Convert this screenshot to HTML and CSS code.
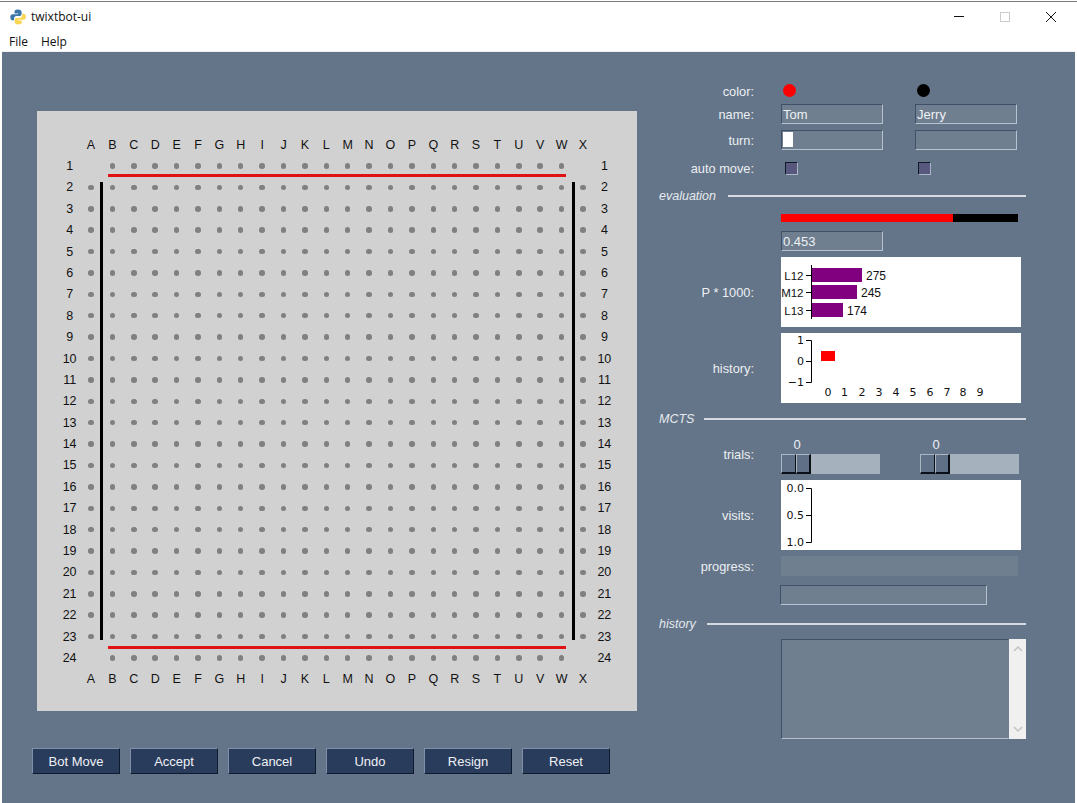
FILE: index.html
```html
<!DOCTYPE html>
<html lang="en">
<head>
<meta charset="utf-8">
<title>twixtbot-ui</title>
<link rel="stylesheet" href="styles.css">
</head>
<body>
<div class="window">
  <header class="titlebar">
    <svg class="appicon" viewBox="0 0 16 16" width="16" height="16">
      <path fill="#3b77a9" d="M8 0.5C5 0.5 4.5 1.6 4.5 3v1.6H8.2v.6H2.8C1.2 5.2 0.3 6.4 0.3 8.2c0 2 1 3.1 2.4 3.1h1.4V9.4c0-1.3 1.1-2.3 2.4-2.3h3.2c1.1 0 1.9-.9 1.9-2V3c0-1.5-1.300-2.500-3.600-2.500z"/>
      <path fill="#f9d654" d="M8.300 15.500c3 0 3.500-1.100 3.500-2.500v-1.600H8.100v-.6h5.400c1.600 0 2.400-1.200 2.400-3 0-2-1-3.100-2.400-3.100h-1.300v1.900c0 1.300-1.100 2.300-2.400 2.300H6.600c-1.100 0-1.900.9-1.900 2V13c0 1.500 1.300 2.500 3.600 2.500z"/>
    </svg>
    <span class="title">twixtbot-ui</span>
    <div class="winctl">
      <span class="ctl"><i class="ctl-min"></i></span>
      <span class="ctl"><i class="ctl-max"></i></span>
      <span class="ctl">
        <svg viewBox="0 0 10 10" width="10" height="10"><path d="M0 0L10 10M10 0L0 10" stroke="#111" stroke-width="1" fill="none"/></svg>
      </span>
    </div>
  </header>
  <nav class="menubar"><span>File</span><span>Help</span></nav>
  <main class="app">
    <section class="left">
      <div class="board">
        <div class="grid" id="grid"></div>
        <i class="edge edge-top"></i>
        <i class="edge edge-bottom"></i>
        <i class="edge edge-left"></i>
        <i class="edge edge-right"></i>
      </div>
      <div class="buttons">
        <button class="btn">Bot Move</button>
        <button class="btn">Accept</button>
        <button class="btn">Cancel</button>
        <button class="btn">Undo</button>
        <button class="btn">Resign</button>
        <button class="btn">Reset</button>
      </div>
    </section>
    <aside class="panel">
      <div class="row row-color">
        <label class="lab">color:</label>
        <div class="col"><i class="stone red"></i></div>
        <div class="col"><i class="stone black"></i></div>
      </div>
      <div class="row row-name">
        <label class="lab">name:</label>
        <div class="col"><div class="field">Tom</div></div>
        <div class="col"><div class="field">Jerry</div></div>
      </div>
      <div class="row row-turn">
        <label class="lab">turn:</label>
        <div class="col"><div class="field"><i class="turnmark"></i></div></div>
        <div class="col"><div class="field"></div></div>
      </div>
      <div class="row row-auto">
        <label class="lab">auto move:</label>
        <div class="col"><i class="check"></i></div>
        <div class="col"><i class="check check-2"></i></div>
      </div>

      <div class="heading heading-eval"><em>evaluation</em><i></i></div>
      <div class="row row-bar">
        <label class="lab"></label>
        <div class="evalbar"><i class="evalred"></i></div>
      </div>
      <div class="row row-val">
        <label class="lab"></label>
        <div class="col"><div class="field">0.453</div></div>
      </div>
      <div class="row row-chart row-p">
        <label class="lab">P * 1000:</label>
        <svg class="chart" width="240" height="70" viewBox="0 0 240 70">
          <rect class="purple" x="31" y="11" width="50" height="14"/>
          <rect class="purple" x="31" y="28" width="45" height="14"/>
          <rect class="purple" x="31" y="46" width="31" height="14"/>
          <path class="axis" d="M30.500 8V62M25 18.500H30M25 35.500H30M25 53.500H30"/>
          <text class="t-a" x="22.500" y="22.500">L12</text>
          <text class="t-a" x="22.500" y="39.500">M12</text>
          <text class="t-a" x="22.500" y="57.500">L13</text>
          <text class="t-v" x="85" y="23">275</text>
          <text class="t-v" x="80" y="40">245</text>
          <text class="t-v" x="66" y="58">174</text>
        </svg>
      </div>
      <div class="row row-chart row-h">
        <label class="lab">history:</label>
        <svg class="chart" width="240" height="70" viewBox="0 0 240 70">
          <rect x="40" y="18" width="14" height="10" fill="#ff0000"/>
          <path class="axis" d="M25 7.500H30.500V49.500H25M25 28.500H30"/>
          <text class="t-d" x="23" y="11">1</text>
          <text class="t-d" x="23" y="32">0</text>
          <text class="t-d" x="23" y="53">−1</text>
          <g class="ticks">
            <text x="47" y="63">0</text><text x="63.500" y="63">1</text><text x="81" y="63">2</text><text x="98" y="63">3</text><text x="115" y="63">4</text><text x="132" y="63">5</text><text x="149" y="63">6</text><text x="166" y="63">7</text><text x="182" y="63">8</text><text x="199" y="63">9</text>
          </g>
        </svg>
      </div>

      <div class="heading heading-mcts"><em>MCTS</em><i></i></div>
      <div class="row row-zero">
        <label class="lab"></label>
        <div class="slidecol"><span class="zero">0</span></div>
        <div class="slidecol slidecol-2"><span class="zero">0</span></div>
      </div>
      <div class="row row-trials">
        <label class="lab">trials:</label>
        <div class="slidecol"><div class="slider"><i class="knob"></i><i class="knob knob-end"></i></div></div>
        <div class="slidecol slidecol-2"><div class="slider"><i class="knob"></i><i class="knob knob-end"></i></div></div>
      </div>
      <div class="row row-chart row-v">
        <label class="lab">visits:</label>
        <svg class="chart" width="240" height="70" viewBox="0 0 240 70">
          <path class="axis" d="M25 8.500H30.500V62.500H25M25 35.500H30"/>
          <text class="t-d" x="23" y="12">0.0</text>
          <text class="t-d" x="23" y="39">0.5</text>
          <text class="t-d" x="23" y="66">1.0</text>
        </svg>
      </div>
      <div class="row row-prog">
        <label class="lab">progress:</label>
        <div class="progress"></div>
      </div>
      <div class="row row-prog2">
        <label class="lab"></label>
        <div class="field field-wide"></div>
      </div>

      <div class="heading heading-hist"><em>history</em><i></i></div>
      <div class="row row-log">
        <label class="lab"></label>
        <div class="log">
          <div class="logtext"></div>
          <div class="scroll">
            <svg viewBox="0 0 10 6" width="10" height="6"><path d="M1 5L5 1L9 5" stroke="#c4c4c4" stroke-width="1.500" fill="none"/></svg>
            <svg viewBox="0 0 10 6" width="10" height="6"><path d="M1 1L5 5L9 1" stroke="#c4c4c4" stroke-width="1.500" fill="none"/></svg>
          </div>
        </div>
      </div>
    </aside>
  </main>
</div>
<script src="board.js"></script>
</body>
</html>
```

FILE: styles.css
```css
* { box-sizing: border-box; }
html, body { margin: 0; height: 100%; overflow: hidden; background: #fff; }
body { font-family: "Liberation Sans", Arial, sans-serif; font-size: 12px; }
i { display: block; font-style: normal; }

.window { height: 802px; display: flex; flex-direction: column; border-top: 1px solid #7a7a7a; margin-top: 1px; padding: 0 2px 0 2px; position: relative; }

.titlebar { height: 29px; flex: none; display: flex; align-items: center; padding-left: 8px; background: #fff; }
.appicon { flex: none; }
.title { font-family: "Open Sans", sans-serif; font-size: 12px; margin-left: 5px; color: #111; }
.winctl { margin-left: auto; display: flex; height: 100%; margin-right: 1px; }
.ctl { width: 46px; display: flex; align-items: center; justify-content: center; }
.ctl-min { width: 10px; height: 1px; background: #111; }
.ctl-max { width: 10px; height: 10px; border: 1px solid #ccc; }

.menubar { height: 20px; flex: none; background: #fff; display: flex; align-items: center; padding: 0 0 0 7px; gap: 13px; font-family: "Open Sans", sans-serif; font-size: 12px; color: #111; }

.app { flex: 1; min-height: 0; background: #647589; display: flex; border-top: 1px solid #eef0f2; }

.left { width: 657px; flex: none; padding: 59px 0 0 35px; }
.board { width: 600px; height: 600px; padding-top: 2px; background: #d1d1d1; display: flex; align-items: center; justify-content: center; position: relative; }
.grid { display: grid; grid-template-columns: repeat(26, 21.4px); grid-template-rows: repeat(26, 21.4px); }
.cell { display: flex; align-items: center; justify-content: center; color: #111; font-size: 12.500px; }
.dot { width: 5.500px; height: 5.500px; border-radius: 50%; background: #808080; }

.edge { position: absolute; }
.edge-top, .edge-bottom { left: 71px; width: 458px; height: 3px; background: #e01212; }
.edge-top { top: 63px; }
.edge-bottom { top: 535px; }
.edge-left, .edge-right { top: 71px; height: 458px; width: 3px; background: #000; }
.edge-left { left: 63px; }
.edge-right { left: 535px; }

.buttons { display: flex; gap: 10px; margin: 37px 0 0 -5px; }
.btn { width: 88px; height: 26px; padding: 0; font: 13px "Liberation Sans", Arial, sans-serif; color: #eef1f5; background: #2a3c5c; border: 1px solid; border-color: #7f90a8 #0e1a2e #0e1a2e #7f90a8; }

.panel { flex: 1; padding-top: 28px; color: #eceff2; font-size: 13px; }
.row { display: flex; align-items: center; }
.lab { width: 95px; flex: none; margin-right: 27px; text-align: right; font-size: 12.800px; }
.col { width: 134px; flex: none; }

.row-color { height: 24px; }
.row-color .lab { margin-bottom: 1px; }
.row-name, .row-turn { height: 20px; }
.row-name .lab { margin-top: 1px; }
.row-turn { margin-top: 6px; }
.row-auto { height: 13px; margin-top: 12px; }

.stone { width: 13px; height: 13px; border-radius: 50%; margin-left: 2px; margin-top: -3px; }
.stone.red { background: #ff0000; }
.stone.black { background: #000; }

.field { width: 102px; height: 20px; background: #6f7f8f; border: 1px solid; border-color: #3f5068 #b6c2d0 #b6c2d0 #3f5068; padding: 1px 0 1px 1px; font-size: 13px; line-height: 17px; color: #eef1f4; overflow: hidden; }
.field-wide { width: 207px; margin-left: -1px; }
.turnmark { width: 10px; height: 15px; background: #fff; }

.check { width: 13px; height: 13px; margin-left: 4px; background: #58587e; border: 1px solid; border-color: #0f1a2a #a8b6c6 #a8b6c6 #0f1a2a; }
.check-2 { margin-left: 3px; }

.heading { display: flex; align-items: center; width: 367px; height: 14px; font-size: 12.500px; }
.heading em { color: #e6eaee; }
.heading i { flex: 1; height: 2px; background: #d6dbe2; }
.heading-eval { margin-top: 14px; }
.heading-eval em { margin-right: 12px; }
.heading-mcts { margin-top: 9px; }
.heading-mcts em { margin-right: 10px; }
.heading-hist { margin-top: 12px; }
.heading-hist em { margin-right: 11px; }

.row-bar { height: 8px; margin-top: 11px; }
.evalbar { width: 237px; height: 8px; background: #000; }
.evalred { width: 172px; height: 8px; background: #ff0000; }
.row-val { height: 20px; margin-top: 9px; }

.row-chart { height: 70px; }
.row-p, .row-h, .row-v { margin-top: 6px; }
.chart { display: block; background: #fff; flex: none; }
.chart text { font-family: "DejaVu Sans", sans-serif; font-size: 11px; fill: #111; }
.chart .t-a { font-family: "Liberation Sans", sans-serif; font-size: 11.500px; text-anchor: end; }
.chart .t-v { font-family: "Liberation Sans", sans-serif; font-size: 12px; }
.chart .t-d { text-anchor: end; }
.chart .ticks text { text-anchor: middle; }
.purple { fill: #800080; }
.axis { fill: none; stroke: #000; stroke-width: 1; }

.row-zero { height: 16px; margin-top: 10px; }
.slidecol { width: 99px; flex: none; }
.slidecol-2 { margin-left: 40px; }
.zero { display: block; width: 32px; text-align: center; font-size: 13px; }
.row-trials { height: 20px; margin-top: 2px; }
.row-trials .lab { margin-bottom: 20px; }
.slider { width: 99px; height: 20px; background: #a5b1bd; display: flex; }
.knob { width: 15px; height: 20px; background: #5f7087; border-style: solid; border-width: 1px 1px 2px 1px; border-color: #aab6c4 #0b0f18 #0b0f18 #aab6c4; }
.knob-end { border-right-width: 2px; }

.row-prog { height: 20px; margin-top: 6px; }
.progress { width: 237px; height: 20px; background: #6f7f8f; }
.row-prog2 { height: 20px; margin-top: 9px; }

.row-log { height: 100px; margin-top: 8px; }
.log { width: 245px; height: 100px; display: flex; }
.logtext { width: 228px; height: 100px; background: #6f7f8f; border: 1px solid; border-color: #3f5068 #6f7f8f #b6c2d0 #3f5068; }
.scroll { width: 17px; height: 100px; background: #f0f0f0; display: flex; flex-direction: column; align-items: center; justify-content: space-between; padding: 7px 0; }
```

FILE: board.js
```js
const grid = document.getElementById("grid");
const letters = "ABCDEFGHIJKLMNOPQRSTUVWX";

function addCell(text, isDot) {
  const cell = document.createElement("div");
  cell.className = "cell";
  if (isDot) {
    const dot = document.createElement("i");
    dot.className = "dot";
    cell.appendChild(dot);
  } else {
    cell.textContent = text;
  }
  grid.appendChild(cell);
}

function addLetterRow() {
  addCell("");
  for (const l of letters) addCell(l);
  addCell("");
}

addLetterRow();
for (let r = 1; r <= 24; r++) {
  addCell(String(r));
  for (let c = 0; c < 24; c++) {
    const corner = (r === 1 || r === 24) && (c === 0 || c === 23);
    addCell("", !corner);
  }
  addCell(String(r));
}
addLetterRow();
```
